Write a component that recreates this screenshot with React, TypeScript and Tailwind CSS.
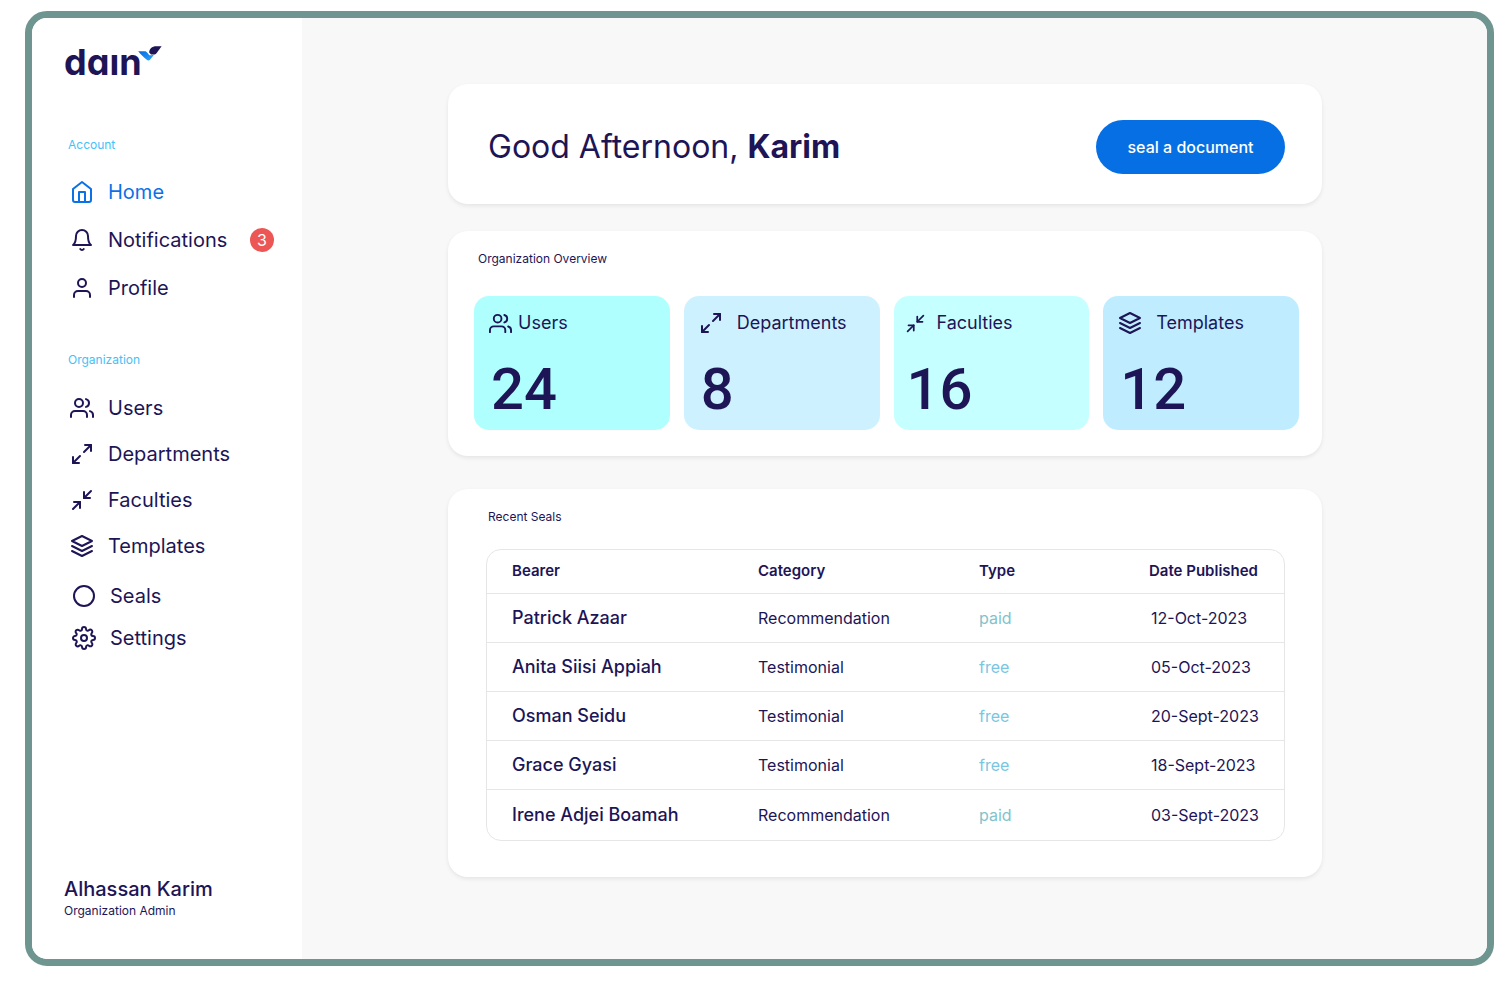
import type { IconType } from "react-icons";
import {
  FiBell,
  FiCircle,
  FiHome,
  FiLayers,
  FiMaximize2,
  FiMinimize2,
  FiSettings,
  FiUser,
  FiUsers,
} from "react-icons/fi";

type NavEntry = { label: string; icon: IconType; active?: boolean; badge?: number };

const accountLinks: NavEntry[] = [
  { label: "Home", icon: FiHome, active: true },
  { label: "Notifications", icon: FiBell, badge: 3 },
  { label: "Profile", icon: FiUser },
];

const organizationLinks: NavEntry[] = [
  { label: "Users", icon: FiUsers },
  { label: "Departments", icon: FiMaximize2 },
  { label: "Faculties", icon: FiMinimize2 },
  { label: "Templates", icon: FiLayers },
];

const utilityLinks: NavEntry[] = [
  { label: "Seals", icon: FiCircle },
  { label: "Settings", icon: FiSettings },
];

const stats = [
  { label: "Users", value: 24, icon: FiUsers, size: 23, card: "bg-[#b0ffff] px-[15px]", head: "gap-1.5" },
  { label: "Departments", value: 8, icon: FiMaximize2, size: 24, card: "bg-[#cef1ff] px-[15px]", head: "gap-3.5" },
  { label: "Faculties", value: 16, icon: FiMinimize2, size: 21, card: "bg-[#c6ffff] px-[11px]", head: "gap-[11px]" },
  { label: "Templates", value: 12, icon: FiLayers, size: 24, card: "bg-[#bfedff] px-[15px]", head: "gap-3.5" },
];

const seals = [
  { bearer: "Patrick Azaar", category: "Recommendation", type: "paid", date: "12-Oct-2023" },
  { bearer: "Anita Siisi Appiah", category: "Testimonial", type: "free", date: "05-Oct-2023" },
  { bearer: "Osman Seidu", category: "Testimonial", type: "free", date: "20-Sept-2023" },
  { bearer: "Grace Gyasi", category: "Testimonial", type: "free", date: "18-Sept-2023" },
  { bearer: "Irene Adjei Boamah", category: "Recommendation", type: "paid", date: "03-Sept-2023" },
];

function NavItem({ label, icon: Icon, active, badge }: NavEntry) {
  return (
    <li>
      <a
        href="#"
        aria-current={active ? "page" : undefined}
        className={
          active
            ? "flex h-6 items-center gap-[14px] text-xl text-[#0a72e6]"
            : "flex h-6 items-center gap-[14px] text-xl text-[#1d1556]"
        }
      >
        <Icon size={24} strokeWidth={2} className="shrink-0" aria-hidden="true" />
        <span>{label}</span>
        {badge !== undefined && (
          <span className="ml-auto flex size-6 items-center justify-center rounded-full bg-[#ec5756] text-base text-white">
            {badge}
          </span>
        )}
      </a>
    </li>
  );
}

function Logo() {
  return (
    <a href="#" aria-label="dain" className="flex h-9 items-start text-[#1d1556]">
      <span className="text-[36px] leading-8 font-bold [font-feature-settings:'cv11']">daın</span>
      <svg width="24" height="16" viewBox="0 0 24 16" className="-ml-1" aria-hidden="true">
        <defs>
          <linearGradient id="wing" x1="0" y1="0" x2="1" y2="1">
            <stop offset="0" stopColor="#0667e0" />
            <stop offset="1" stopColor="#2ba6fb" />
          </linearGradient>
        </defs>
        <path
          d="M0.200 5.200H6.500C8 5.200 8.600 5.800 9.500 7L11.400 9.300C12.600 9.300 14.500 9.300 16 8.700L12.200 13.500C11 14.800 9.900 14.700 8.500 13.600C5.600 11.300 3 8.600 0.200 5.200Z"
          fill="url(#wing)"
        />
        <path
          d="M23.600 0.300H18.500C13.800 0.300 11.200 3 11.200 6.500L13 8.500H15.500C17 8.500 17.800 8 18.700 6.900Z"
          fill="#1d1556"
        />
      </svg>
    </a>
  );
}

function Sidebar() {
  return (
    <aside className="flex w-[270px] shrink-0 flex-col bg-white pt-7 pr-7 pb-[38px] pl-8">
      <Logo />
      <nav aria-label="Main" className="mt-[53px] flex flex-col">
        <h2 className="pl-1 text-xs leading-5 text-[#45c1f9]">Account</h2>
        <ul className="mt-[25px] flex flex-col gap-6 pl-1.5">
          {accountLinks.map((item) => (
            <NavItem key={item.label} {...item} />
          ))}
        </ul>
        <h2 className="mt-[50px] pl-1 text-xs leading-5 text-[#45c1f9]">Organization</h2>
        <ul className="mt-[26px] flex flex-col gap-[22px] pl-1.5">
          {organizationLinks.map((item) => (
            <NavItem key={item.label} {...item} />
          ))}
        </ul>
        <ul className="mt-[26px] flex flex-col gap-[18px] pl-2">
          {utilityLinks.map((item) => (
            <NavItem key={item.label} {...item} />
          ))}
        </ul>
      </nav>
      <div className="mt-auto text-[#1d1556]">
        <p className="text-xl leading-6 font-medium">Alhassan Karim</p>
        <p className="text-xs leading-5">Organization Admin</p>
      </div>
    </aside>
  );
}

export default function App() {
  return (
    <div className="flex min-h-screen bg-white pt-[11px] pr-[18px] pb-4 pl-[25px] font-['Inter',sans-serif] text-[#1d1556]">
      <div className="flex flex-1 overflow-hidden rounded-[22px] border-[7px] border-[#6f9591]">
        <Sidebar />
        <main className="flex min-w-0 flex-1 flex-col bg-[#f8f8f8] pt-[66px] pr-[165px] pb-16 pl-[146px]">
          <header className="flex h-[120px] items-center justify-between rounded-[20px] bg-white pt-1.5 pr-[37px] pl-10 shadow-[0_2px_4px_rgba(0,0,0,0.08)]">
            <h1 className="text-[32px] leading-10">
              Good Afternoon, <strong className="font-bold">Karim</strong>
            </h1>
            <button
              type="button"
              className="h-[54px] w-[189px] rounded-full bg-[#066fe4] text-base font-medium text-white"
            >
              seal a document
            </button>
          </header>

          <section className="mt-[27px] rounded-[20px] bg-white pt-[18px] pr-[23px] pb-[26px] pl-[26px] shadow-[0_2px_4px_rgba(0,0,0,0.08)]">
            <h2 className="pl-1 text-xs leading-5">Organization Overview</h2>
            <div className="mt-[27px] grid grid-cols-4 gap-[14px]">
              {stats.map(({ label, value, icon: Icon, size, card, head }) => (
                <article key={label} className={`h-[134px] rounded-[15px] pt-[15px] ${card}`}>
                  <h3 className={`flex h-6 items-center text-lg ${head}`}>
                    <Icon size={size} strokeWidth={2} className="shrink-0" aria-hidden="true" />
                    {label}
                  </h3>
                  <p className="mt-[22px] pl-0.5 font-['Roboto',sans-serif] text-[58px] leading-[64px] font-medium">
                    {value}
                  </p>
                </article>
              ))}
            </div>
          </section>

          <section className="mt-[33px] rounded-[20px] bg-white pt-[18px] pr-[37px] pb-9 pl-[38px] shadow-[0_2px_4px_rgba(0,0,0,0.08)]">
            <h2 className="pl-0.5 text-xs leading-5">Recent Seals</h2>
            <div className="mt-[22px] overflow-hidden rounded-[15px] border border-[#e6e6e6]">
              <table className="w-full table-fixed border-collapse text-left">
                <colgroup>
                  <col className="w-[271px]" />
                  <col className="w-[221px]" />
                  <col className="w-[170px]" />
                  <col />
                </colgroup>
                <thead>
                  <tr className="h-[43px] text-[15px] leading-5">
                    <th className="pl-[25px] font-semibold">Bearer</th>
                    <th className="font-semibold">Category</th>
                    <th className="font-semibold">Type</th>
                    <th className="font-semibold whitespace-nowrap">Date Published</th>
                  </tr>
                </thead>
                <tbody>
                  {seals.map((seal) => (
                    <tr
                      key={seal.bearer}
                      className="h-[49px] border-t border-[#e6e6e6] text-base last:h-[51px]"
                    >
                      <td className="pl-[25px] text-lg font-medium">{seal.bearer}</td>
                      <td>{seal.category}</td>
                      <td className={seal.type === "paid" ? "text-[#82c3cb]" : "text-[#78c6e2]"}>{seal.type}</td>
                      <td className="pl-0.5 whitespace-nowrap">{seal.date}</td>
                    </tr>
                  ))}
                </tbody>
              </table>
            </div>
          </section>
        </main>
      </div>
    </div>
  );
}
